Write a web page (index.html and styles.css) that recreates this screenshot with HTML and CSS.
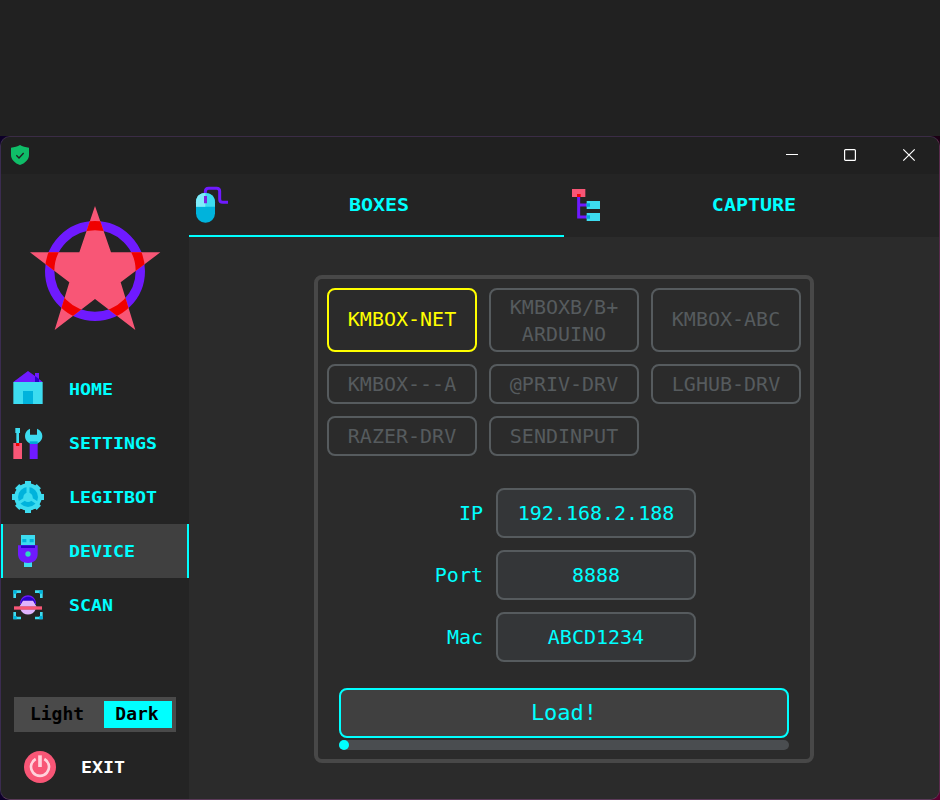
FILE: index.html
```html
<!DOCTYPE html>
<html lang="en">
<head>
<meta charset="utf-8">
<title>Device</title>
<link rel="stylesheet" href="styles.css">
</head>
<body>
<div class="backdrop">
<div class="window">
  <header class="titlebar">
    <svg class="shield" viewBox="0 0 54 60"><path fill="#0fbd68" d="M27 0C34 5 44 7 54 8V30C54 44 42 55 27 60C12 55 0 44 0 30V8C10 7 20 5 27 0Z"/><path d="M16 31L24 39L38 24" fill="none" stroke="#202020" stroke-width="4"/></svg>
    <div class="controls">
      <svg viewBox="0 0 12 12"><path d="M0 5.5H12"/></svg>
      <svg viewBox="0 0 12 12"><rect x=".6" y=".6" width="10.8" height="10.8" rx="1"/></svg>
      <svg viewBox="0 0 12 12"><path d="M.3 .3L11.7 11.7M11.7 .3L.3 11.7"/></svg>
    </div>
  </header>
  <div class="body">
    <aside class="sidebar">
      <svg class="logo" viewBox="87 240 396 378">
        <defs><clipPath id="star"><path d="M285 243L333 382H481L362 472L406 615L285 522L164 615L208 472L90 382H238Z"/></clipPath></defs>
        <circle cx="285" cy="438" r="136" fill="none" stroke="#6f1aff" stroke-width="28"/>
        <path fill="#f85676" d="M285 243L333 382H481L362 472L406 615L285 522L164 615L208 472L90 382H238Z"/>
        <circle cx="285" cy="438" r="136" fill="none" stroke="#f00000" stroke-width="28" clip-path="url(#star)"/>
      </svg>
      <nav class="nav">
        <a class="item">
          <svg viewBox="36 39 96 96"><path fill="#6f1aff" d="M40 66L84 33L105 48V39H117V57L128 66Z"/><path fill="#2a00c8" d="M105 48L117 57V66H105Z"/><path fill="#3ddcf0" d="M40 66H128V132H40Z"/><path fill="#00b3dc" d="M69 93H99V132H69Z"/></svg>
          <span>HOME</span></a>
        <a class="item">
          <svg viewBox="36 201 96 96"><path fill="#3ddcf0" d="M46 204H60V219H57V250H49V219H46ZM90 206V224H111V206C121 210 127 218 127 228C127 242 116 252 101 252C86 252 75 242 75 228C75 218 80 210 90 206Z"/><path fill="#f85676" d="M40 249H66V297H40Z"/><path fill="#f00000" d="M48 249H58V258H48Z"/><path fill="#6f1aff" d="M89 251H113V297H89Z"/><path fill="#00a6d8" d="M89 244H113V252H89Z"/></svg>
          <span>SETTINGS</span></a>
        <a class="item">
          <svg viewBox="36 33 96 96"><g fill="#3ddcf0"><circle cx="84" cy="81" r="41"/><rect x="75" y="33" width="18" height="96"/><rect x="36" y="72" width="96" height="18"/><rect x="75" y="35" width="18" height="92" transform="rotate(45 84 81)"/><rect x="75" y="35" width="18" height="92" transform="rotate(-45 84 81)"/></g><circle cx="84" cy="81" r="30" fill="#00b3dc"/><path d="M84 51V81L57 98M84 81L111 98" fill="none" stroke="#3ddcf0" stroke-width="9"/><circle cx="84" cy="82" r="14" fill="#3ddcf0"/></svg>
          <span>LEGITBOT</span></a>
        <a class="item active">
          <svg viewBox="36 195 96 96"><path fill="#3ddcf0" d="M63 195H105V228H63ZM72 275H96V291H72Z"/><path fill="#00b3dc" d="M67 207H79V217H67ZM89 207H101V217H89Z"/><path fill="#6f1aff" d="M54 226H113V251C113 268 103 278 84 279C64 278 54 268 54 251Z"/><path fill="#2a00c8" d="M63 226H105V234H63Z"/><circle cx="84" cy="252" r="8" fill="#2cdcc0"/></svg>
          <span>DEVICE</span></a>
        <a class="item">
          <svg viewBox="36 357 96 96"><path d="M44 384V365H63M105 365H124V384M124 426V444H105M63 444H44V426" fill="none" stroke="#3ddcf0" stroke-width="8"/><path fill="#00b3dc" d="M40 361H50V371H40ZM118 361H128V371H118ZM40 438H50V448H40ZM118 438H128V448H118Z"/><path fill="#6f1aff" d="M60 402C60 367 108 367 108 402Z"/><path fill="#2a00c8" d="M62 402C63 373 105 373 106 402Z"/><path fill="#e0b4ff" d="M58 410L69 392H99L110 410ZM61 418H107C100 439 68 439 61 418Z"/><path fill="#f85676" d="M42 409H126V419H42Z"/></svg>
          <span>SCAN</span></a>
      </nav>
      <div class="theme"><span class="off">Light</span><span class="on">Dark</span></div>
      <div class="exit">
        <svg viewBox="0 0 96 96"><circle cx="48" cy="48" r="48" fill="#f85676"/><path d="M35 24A27 27 0 1 0 61 24" fill="none" stroke="#ffd2dc" stroke-width="8"/><path d="M48 13V48" stroke="#ffd2dc" stroke-width="11"/></svg>
        <span>EXIT</span>
      </div>
    </aside>
    <main class="content">
      <div class="tabs">
        <div class="tab active">
          <svg class="mouse" viewBox="30 51 108 108"><path d="M61 78V65Q61 55 71 55H95Q104 55 104 64V88Q104 97 113 97H129" fill="none" stroke="#6f1aff" stroke-width="9"/><rect x="33" y="69" width="57" height="89" rx="28" fill="#00b3dc"/><path fill="#3ddcf0" d="M33 110V97C33 60 90 60 90 97V110Z"/><path fill="#80ecfa" d="M33 110V97C33 78 46 69 61 69V110Z"/><path fill="#8022df" d="M57 78H66V100H57Z"/></svg>
          <span>BOXES</span></div>
        <div class="tab">
          <svg class="tree" viewBox="30 177 96 96"><path d="M56 196V261H84M56 225H84" fill="none" stroke="#6f1aff" stroke-width="9"/><path fill="#f85676" d="M36 177H76V201H36Z"/><path fill="#f00000" d="M51 192H62V201H51Z"/><path fill="#3ddcf0" d="M80 213H120V237H80ZM80 249H120V273H80Z"/><path fill="#00a6d8" d="M80 220H90V230H80ZM80 256H90V266H80Z"/></svg>
          <span>CAPTURE</span></div>
      </div>
      <section class="panel">
        <div class="boxes">
          <button class="tall selected">KMBOX-NET</button><button class="double">KMBOXB/B+<br>ARDUINO</button><button class="tall">KMBOX-ABC</button>
          <button>KMBOX---A</button><button>@PRIV-DRV</button><button>LGHUB-DRV</button>
          <button>RAZER-DRV</button><button>SENDINPUT</button>
        </div>
        <div class="fields">
          <label>IP</label><div class="field">192.168.2.188</div>
          <label>Port</label><div class="field">8888</div>
          <label>Mac</label><div class="field">ABCD1234</div>
        </div>
        <button class="load">Load!</button>
        <div class="progress"><div class="bar"></div></div>
      </section>
    </main>
  </div>
</div>
</div>
</body>
</html>
```
FILE: styles.css
```css
* { box-sizing: border-box; }
body { margin: 0; padding-top: 136px; width: 940px; height: 800px; background: #212121; overflow: hidden; font-family: "DejaVu Sans Mono", monospace; color: #00ffff; }
svg { display: block; overflow: visible; flex: none; }
.backdrop { height: 664px; background: linear-gradient(90deg, transparent 50%, #1c0014 50%, #5c0030) 0 100% / 100% 20px no-repeat, linear-gradient(90deg, #0d0028 50%, #1c0014 50%); }
.window { height: 664px; border: 1px solid; border-color: #3b2c46 #5a2a4c #5c3a5a #3b2c50; border-radius: 10px; overflow: hidden; background: #2b2b2b; display: flex; flex-direction: column; }
.titlebar { height: 37px; background: #202020; display: flex; align-items: center; justify-content: space-between; padding: 0 24px 1px 10px; }
.shield { width: 18px; height: 20px; }
.controls { display: flex; gap: 47px; fill: none; stroke: #fff; stroke-width: 1.2; }
.controls svg { width: 12px; height: 12px; }
.controls svg:first-child { margin-right: -1px; }
.body { flex: 1; display: flex; }
.sidebar { width: 188px; background: #242424; display: flex; flex-direction: column; }
.logo { width: 132px; height: 126px; margin: 31px 0 31px 28px; }
.item { height: 54px; display: flex; align-items: center; padding-left: 9px; border: solid transparent; border-width: 0 2px; }
.item svg { width: 32px; height: 32px; margin-right: 25px; }
.item.active { background: #404040; border-color: #00ffff; }
.item span, .exit span, .theme span { font-size: 18.3px; font-weight: bold; }
.item span, .exit span { transform: scaleY(.86); }
.theme { width: 162px; height: 35px; margin: 65px 0 0 13px; padding: 4px; background: #4a4a4a; display: flex; color: #000; }
.theme span { font-size: 18px; line-height: 26px; text-align: center; }
.theme .off { width: 86px; padding-right: 8px; transform: scaleY(.93); }
.theme .on { width: 68px; padding-right: 2px; background: #00ffff; }
.exit { display: flex; align-items: center; margin: 19px 0 0 23px; color: #fff; }
.exit svg { width: 32px; height: 32px; margin-right: 25px; }
.content { flex: 1; background: #2b2b2b; }
.tabs { display: flex; height: 63px; background: #242424; }
.tab { flex: 1; display: flex; align-items: center; border-bottom: 2px solid transparent; font-size: 20px; font-weight: bold; }
.tab.active { border-color: #00ffff; }
.tab span { flex: 1; text-align: center; transform: scaleY(.91); }
.mouse { width: 36px; height: 36px; margin: 1px 0 0 6px; }
.tab.active span { padding-right: 37px; }
.tree { width: 32px; height: 32px; margin-left: 6px; }
.tab:last-child span { padding-right: 33px; }
.panel { width: 500px; height: 488px; margin: 38px auto 0; border: 4px solid #484848; border-radius: 8px; padding: 9px; }
.boxes { display: grid; grid-template-columns: repeat(3, 150px); grid-template-rows: 64px 40px 40px; gap: 12px; }
button { font: 20px/27px "DejaVu Sans Mono", monospace; padding: 0; background: none; border: 2px solid #565b5e; border-radius: 8px; color: #565b5e; }
.boxes .tall { padding-bottom: 2px; }
.boxes .double { padding-top: 2px; }
.boxes .selected { color: #ffff00; border-color: #ffff00; }
.fields { display: grid; grid-template-columns: 156px 200px; gap: 12px 13px; margin-top: 32px; align-items: center; text-align: right; font-size: 20px; }
.field { height: 50px; line-height: 46px; background: #343638; border: 2px solid #565b5e; border-radius: 8px; text-align: center; }
.load { display: block; width: 450px; height: 50px; margin: 26px 0 0 12px; padding-bottom: 2px; background: #404040; border-color: #00ffff; color: #00ffff; font-size: 22px; }
.progress { width: 450px; height: 10px; margin: 2px 0 0 12px; background: #4a4d50; border-radius: 5px; }
.bar { width: 10px; height: 10px; border-radius: 5px; background: #00ffff; }
```
